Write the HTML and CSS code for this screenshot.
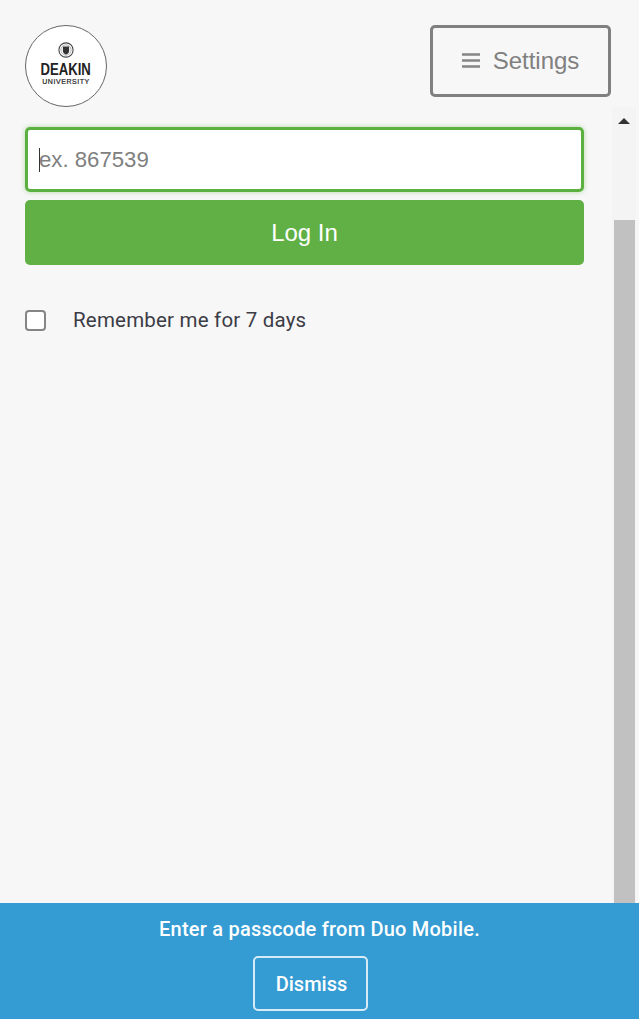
FILE: index.html
```html
<!DOCTYPE html>
<html lang="en">
<head>
  <meta charset="UTF-8" />
  <title>Log In</title>
  <link rel="stylesheet" href="styles.css">
</head>
<body>

  <div class="header">
    <div class="logo">
      <svg class="crest" viewBox="0 0 18 18" width="18" height="16">
        <circle cx="9" cy="9" r="8" fill="none" stroke="#444" stroke-width="1.2"/>
        <circle cx="9" cy="9" r="5.8" fill="none" stroke="#aaa" stroke-width="1"/>
        <path d="M5.5 5h7v5c0 2-1.6 3.2-3.5 4-1.9-.8-3.5-2-3.5-4z" fill="#333"/>
      </svg>
      <span class="logo-name">DEAKIN</span>
      <span class="logo-sub">UNIVERSITY</span>
    </div>
    <button class="settings" type="button">
      <svg viewBox="0 0 18 15" width="18" height="15">
        <path d="M0 1.5h18M0 7.5h18M0 13.5h18" stroke="#858585" stroke-width="2.6"/>
      </svg>
      <span>Settings</span>
    </button>
  </div>

  <div class="middle">
    <form class="login-form">
      <div class="input-wrap">
        <span class="caret"></span>
        <input type="text" placeholder="ex. 867539" />
      </div>
      <button class="login-btn" type="button">Log In</button>
      <label class="remember">
        <input type="checkbox" />
        <span>Remember me for 7 days</span>
      </label>
    </form>
    <div class="scrollbar">
      <div class="arrow"></div>
      <div class="thumb"></div>
    </div>
  </div>

  <div class="notice">
    <p>Enter a passcode from Duo Mobile.</p>
    <button class="dismiss" type="button">Dismiss</button>
  </div>

</body>
</html>
```

FILE: styles.css
```css
* {
  box-sizing: border-box;
  font-family: 'Liberation Sans', Arial, sans-serif;
}

html, body {
  height: 100%;
}

body {
  margin: 0;
  display: flex;
  flex-direction: column;
  background: #f7f7f7;
  color: #3c3c46;
  overflow: hidden;
}

.header {
  height: 107px;
  flex: none;
  display: flex;
  justify-content: space-between;
  align-items: flex-start;
  padding: 25px 28px 0 25px;
}

.logo {
  width: 82px;
  height: 82px;
  border: 1.5px solid #666;
  border-radius: 50%;
  background: #fff;
  display: flex;
  flex-direction: column;
  align-items: center;
  padding-top: 16px;
  color: #222;
}

.crest {
  display: block;
}

.logo-name {
  font-size: 16px;
  line-height: 15px;
  margin-top: 4px;
  font-weight: 700;
  transform: scaleX(0.82);
}

.logo-sub {
  font-size: 7px;
  line-height: 8px;
  margin-top: 1px;
  letter-spacing: 0.55px;
  -webkit-text-stroke: 0.2px #222;
}

.settings {
  width: 181px;
  height: 72px;
  display: flex;
  align-items: center;
  justify-content: center;
  gap: 13px;
  background: #f7f7f7;
  border: 3px solid #808080;
  border-radius: 5px;
  font-size: 24px;
  color: #808080;
}

.settings svg {
  margin-top: -2px;
}

.middle {
  flex: 1;
  display: flex;
  min-height: 0;
}

.login-form {
  width: 559px;
  margin: 20px 0 0 25px;
}

.input-wrap {
  position: relative;
  height: 65px;
  margin-bottom: 8px;
}

.input-wrap input {
  width: 100%;
  height: 100%;
  padding: 0 11px;
  background: #fff;
  border: 3px solid #5cb040;
  border-radius: 5px;
  box-shadow: 0 0 5px rgba(92, 176, 64, 0.45);
  font-size: 22.2px;
  outline: none;
}

.input-wrap input::placeholder {
  color: #808080;
  opacity: 1;
}

.caret {
  position: absolute;
  left: 14px;
  top: 21px;
  width: 1px;
  height: 24px;
  background: #333;
}

.login-btn {
  display: block;
  width: 100%;
  height: 65px;
  background: #60b046;
  border: none;
  border-radius: 5px;
  color: #fff;
  font-size: 24px;
}

.remember {
  display: flex;
  align-items: center;
  gap: 27px;
  margin-top: 43px;
  font-size: 20.5px;
}

.remember span {
  font-family: Roboto, 'Liberation Sans', sans-serif;
  letter-spacing: 0.2px;
}

.remember input {
  appearance: none;
  width: 21px;
  height: 21px;
  margin: 0;
  flex: none;
  background: #fff;
  border: 2px solid #858585;
  border-radius: 4px;
}

.scrollbar {
  width: 24px;
  margin-left: 28px;
  background: #f4f4f4;
  display: flex;
  flex-direction: column;
  align-items: center;
}

.arrow {
  margin-top: 11px;
  width: 0;
  height: 0;
  border-left: 6px solid transparent;
  border-right: 6px solid transparent;
  border-bottom: 6px solid #333;
}

.thumb {
  flex: 1;
  width: 21px;
  margin-top: 96px;
  background: #c1c1c1;
}

.notice {
  height: 116px;
  flex: none;
  background: #349bd3;
  color: #fff;
  text-align: center;
  padding-top: 14px;
}

.notice p {
  margin: 0 0 15px;
  font-family: Roboto, 'Liberation Sans', sans-serif;
  font-size: 20px;
  font-weight: 500;
  letter-spacing: 0.22px;
  line-height: 24px;
}

.dismiss {
  display: block;
  width: 115px;
  height: 55px;
  margin: 0 auto;
  position: relative;
  left: -9px;
  padding: 0 0 0 2px;
  background: transparent;
  border: 2px solid #d6ebf6;
  border-radius: 5px;
  color: #fff;
  font-family: Roboto, 'Liberation Sans', sans-serif;
  font-size: 20px;
  font-weight: 500;
}
```
